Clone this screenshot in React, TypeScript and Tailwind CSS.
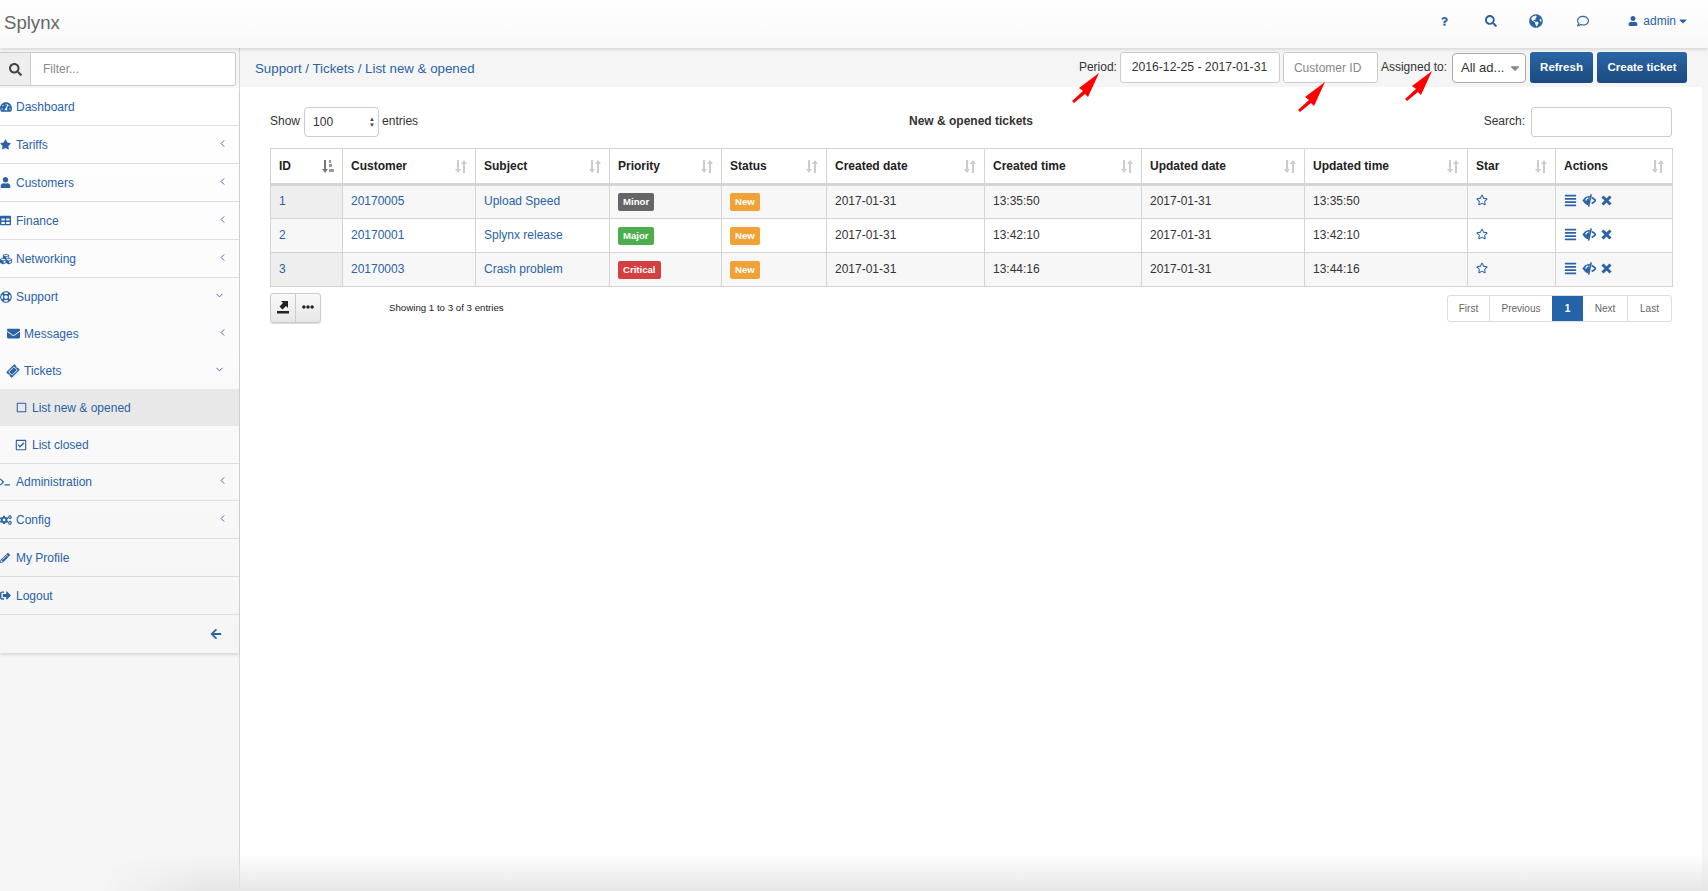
import {
  FaAlignJustify, FaArrowLeft, FaCaretDown, FaCogs, FaCubes, FaEllipsisH,
  FaEnvelope, FaGlobeAmericas, FaPencilAlt, FaQuestion, FaRegCheckSquare,
  FaRegComment, FaRegLifeRing, FaRegSquare, FaRegStar, FaSearch, FaSignOutAlt, FaStar, FaTable, FaTachometerAlt,
  FaTerminal, FaTicketAlt, FaUser,
} from 'react-icons/fa';
import { ChevronDown, ChevronLeft } from 'lucide-react';

const columns = [
  { name: 'ID', width: 'w-[72px]' },
  { name: 'Customer', width: 'w-[133px]' },
  { name: 'Subject', width: 'w-[134px]' },
  { name: 'Priority', width: 'w-[112px]' },
  { name: 'Status', width: 'w-[105px]' },
  { name: 'Created date', width: 'w-[158px]' },
  { name: 'Created time', width: 'w-[157px]' },
  { name: 'Updated date', width: 'w-[163px]' },
  { name: 'Updated time', width: 'w-[163px]' },
  { name: 'Star', width: 'w-[88px]' },
  { name: 'Actions', width: 'w-[117px]' },
];

const tickets = [
  { id: 1, customer: '20170005', subject: 'Upload Speed', priority: 'Minor', color: 'bg-[#666666]', time: '13:35:50' },
  { id: 2, customer: '20170001', subject: 'Splynx release', priority: 'Major', color: 'bg-[#4cae4c]', time: '13:42:10' },
  { id: 3, customer: '20170003', subject: 'Crash problem', priority: 'Critical', color: 'bg-[#d43f3f]', time: '13:44:16' },
];

function SortIcon({ active }: { active?: boolean }) {
  if (active) {
    return (
      <svg width="12" height="13" viewBox="0 0 12 13" className="shrink-0">
        <path d="M2 0h2v9h2l-3 4-3-4h2z" fill="#777" />
        <path d="M7 0h2v3H7zM7 4h3v3H7zM7 9h5v3H7z" fill="#999" />
      </svg>
    );
  }
  return (
    <svg width="12" height="13" viewBox="0 0 12 13" className="shrink-0">
      <path d="M2 0h2v9h2l-3 4-3-4h2z" fill="#ccc" />
      <path d="M8 13h2V4h2L9 0 6 4h2z" fill="#ccc" />
    </svg>
  );
}

function ExportIcon() {
  return (
    <svg width="12" height="13" viewBox="0 0 12 13" className="mb-[2px]">
      <path d="M0 10h12v2.500H0z" fill="#222" />
      <path d="M4 0h7v7L9 5 5.500 8.500 2.500 5.500 6 2z" fill="#222" />
    </svg>
  );
}

function EyeIcon() {
  return (
    <svg width="14" height="13" viewBox="0 0 16 14" fill="none">
      <path d="M9 1.500C5 1.500 2.500 4 .5 7c2 3 4.500 5.500 7 5.500z" fill="#2a62a8" />
      <path d="M7.500 4.200C5.800 4.400 4.500 5.600 4.300 7.200" stroke="#ffffff" strokeWidth="1.300" />
      <path d="M11 3.500C13 4.500 14.500 5.800 15.500 7c-1 1.200-2.500 2.500-4.500 3.500" stroke="#2a62a8" strokeWidth="1.800" />
      <path d="M10.500 0L7.500 14" stroke="#2a62a8" strokeWidth="1.800" />
    </svg>
  );
}

function CloseIcon() {
  return (
    <svg width="11" height="11" viewBox="0 0 11 11" fill="none">
      <path d="M1.500 1.500l8 8M9.500 1.500l-8 8" stroke="#2a62a8" strokeWidth="3" />
    </svg>
  );
}

function Arrow({ className }: { className: string }) {
  return (
    <svg width="28" height="30" viewBox="0 0 28 30" className={`absolute ${className}`}>
      <polygon points="27,0 7,15 11,18 0,28 2,30 13,21 16,24" fill="#ff0000" />
    </svg>
  );
}

function MenuRow({
  icon,
  label,
  chevron,
  border = true,
  className = 'h-[38px]',
  pad = 'pl-0',
  gap = 'w-[16px]',
}: {
  icon: React.ReactNode;
  label: string;
  chevron?: 'left' | 'down';
  border?: boolean;
  className?: string;
  pad?: string;
  gap?: string;
}) {
  return (
    <div className={`flex items-center text-[12px] text-[#2a62a8] ${pad} ${className} ${border ? 'border-b border-[#dedede]' : ''}`}>
      <span className={`flex items-center ${gap} shrink-0`}>{icon}</span>
      <span className="flex-1">{label}</span>
      {chevron === 'left' && <ChevronLeft size={11} strokeWidth={2} className="mr-[11px] mb-[3px]" />}
      {chevron === 'down' && <ChevronDown size={11} strokeWidth={2} className="mr-[14px] mb-[3px]" />}
    </div>
  );
}

export default function App() {
  return (
    <div className="relative flex h-[891px] w-full flex-col overflow-hidden bg-white font-['Liberation_Sans',Arial,sans-serif] text-[12px] text-[#333]">
      <header className="z-10 flex h-[48px] items-center bg-gradient-to-b from-white to-[#f8f8f8] pr-[19px] pl-[4px] shadow-[0_1px_4px_rgba(0,0,0,0.16)]">
        <div className="mb-[2px] flex-1 text-[18.600px] text-[#666]">Splynx</div>
        <div className="mb-[6px] flex items-center text-[12px] text-[#2a62a8]">
          <FaQuestion className="mr-[36px] text-[9px]" />
          <FaSearch className="mr-[32px] text-[12px]" />
          <FaGlobeAmericas className="mr-[34px] text-[14px]" />
          <FaRegComment className="mr-[39px] text-[12px]" />
          <FaUser className="mr-[5px] text-[10px]" />
          <span>admin</span>
          <FaCaretDown className="ml-[1px] text-[12px]" />
        </div>
      </header>

      <div className="flex min-h-0 flex-1">
        <aside className="flex w-[240px] shrink-0 flex-col border-r border-[#d8d8d8] bg-[#f6f6f6]">
          <div className="flex h-[40px] items-start bg-[#f5f5f5] pt-[4px]">
            <div className="flex h-[34px] w-[31px] items-center justify-center border-y border-r border-[#cccccc] bg-[#eeeeee]">
              <FaSearch className="text-[13px] text-[#444]" />
            </div>
            <input
              placeholder="Filter..."
              className="h-[34px] w-[205px] rounded-r-[3px] border-y border-r border-[#cccccc] bg-white pl-[12px] text-[12px] placeholder:text-[#888] outline-none"
            />
          </div>
          <nav className="bg-gradient-to-b from-white to-[#f5f5f5] shadow-[0_2px_3px_rgba(0,0,0,0.12)]">
            <MenuRow icon={<FaTachometerAlt className="text-[12px]" />} label="Dashboard" />
            <MenuRow icon={<FaStar className="text-[11px]" />} label="Tariffs" chevron="left" />
            <MenuRow icon={<FaUser className="text-[11px]" />} label="Customers" chevron="left" />
            <MenuRow icon={<FaTable className="text-[11px]" />} label="Finance" chevron="left" />
            <MenuRow icon={<FaCubes className="text-[12px]" />} label="Networking" chevron="left" />
            <MenuRow icon={<FaRegLifeRing className="text-[12px]" />} label="Support" chevron="down" border={false} className="h-[37px]" />
            <MenuRow icon={<FaEnvelope className="text-[13px]" />} label="Messages" chevron="left" border={false} className="h-[37px]" pad="pl-[7px]" gap="w-[17px]" />
            <MenuRow icon={<FaTicketAlt className="-rotate-45 text-[12px]" />} label="Tickets" chevron="down" border={false} className="h-[37px]" pad="pl-[7px]" gap="w-[17px]" />
            <MenuRow icon={<FaRegSquare className="text-[11px]" />} label="List new & opened" border={false} className="h-[37px] bg-[#e8e8e8]" pad="pl-[16px]" />
            <MenuRow icon={<FaRegCheckSquare className="text-[12px]" />} label="List closed" className="h-[38px]" pad="pl-[15px]" gap="w-[17px]" />
            <MenuRow icon={<FaTerminal className="text-[10px]" />} label="Administration" chevron="left" className="h-[37px]" />
            <MenuRow icon={<FaCogs className="text-[12px]" />} label="Config" chevron="left" />
            <MenuRow icon={<FaPencilAlt className="text-[10px]" />} label="My Profile" />
            <MenuRow icon={<FaSignOutAlt className="text-[11px]" />} label="Logout" />
            <div className="flex h-[38px] items-center justify-end pr-[17px] text-[#2a62a8]">
              <FaArrowLeft className="text-[12px]" />
            </div>
          </nav>
        </aside>

        <main className="flex min-w-0 flex-1 flex-col bg-white pr-[6px]">
          <div className="flex h-[39px] items-center rounded-br-[3px] bg-[#f5f5f5] pr-[15px] pl-[15px]">
            <div className="flex-1 pt-[2px] text-[13.300px] text-[#2a62a8]">Support / Tickets / List new &amp; opened</div>
            <span className="mr-[3px] mb-[2px]">Period:</span>
            <div className="flex h-[31px] w-[160px] items-center justify-center rounded-[3px] border border-[#cccccc] bg-white pr-[1px] text-[12.200px]">2016-12-25 - 2017-01-31</div>
            <input
              placeholder="Customer ID"
              className="ml-[3px] h-[31px] w-[95px] rounded-[3px] border border-[#cccccc] bg-white pl-[10px] text-[12px] placeholder:text-[#888] outline-none"
            />
            <span className="mr-[5px] mb-[2px] ml-[3px]">Assigned to:</span>
            <div className="flex h-[30px] w-[74px] items-center justify-between rounded-[4px] border border-[#aaaaaa] bg-white pr-[3px] pl-[8px] text-[13px]">
              <span>All ad...</span>
              <FaCaretDown className="text-[14px] text-[#888]" />
            </div>
            <button className="ml-[4px] h-[31px] w-[63px] rounded-[3px] bg-gradient-to-b from-[#2a66a6] to-[#1c4a80] font-bold text-[11.500px] text-white">Refresh</button>
            <button className="ml-[4px] h-[31px] w-[90px] rounded-[3px] bg-gradient-to-b from-[#2a66a6] to-[#1c4a80] font-bold text-[11.500px] text-white">Create ticket</button>
          </div>

          <section className="pt-[20px] pr-[30px] pl-[30px]">
            <div className="flex h-[30px] items-center">
              <div className="flex w-[460px] items-center">
                <span className="mr-[4px] mb-[2px]">Show</span>
                <div className="flex h-[30px] w-[75px] items-center justify-between rounded-[4px] border border-[#cccccc] pr-[3px] pl-[8px]">
                  <span>100</span>
                  <span className="flex flex-col text-[6px] leading-[6px] text-[#444]">
                    <span>▲</span>
                    <span>▼</span>
                  </span>
                </div>
                <span className="ml-[3px] mb-[2px]">entries</span>
              </div>
              <div className="mb-[2px] flex-1 text-center font-bold">New &amp; opened tickets</div>
              <div className="flex w-[460px] items-center justify-end">
                <span className="mr-[6px] mb-[2px]">Search:</span>
                <input className="h-[30px] w-[141px] rounded-[3px] border border-[#cccccc] outline-none" />
              </div>
            </div>

            <table className="mt-[11px] w-[1402px] table-fixed border-collapse border border-[#d4d4d4]">
              <colgroup>
                {columns.map(c => <col key={c.name} className={c.width} />)}
              </colgroup>
              <thead>
                <tr className="h-[36px] border-b-[3px] border-[#d4d4d4]">
                  {columns.map(c => (
                    <th key={c.name} className="border-r border-[#d4d4d4] pr-[8px] pl-[8px] text-left font-bold text-[#222]">
                      <div className="flex items-center justify-between">
                        {c.name}
                        <SortIcon active={c.name === 'ID'} />
                      </div>
                    </th>
                  ))}
                </tr>
              </thead>
              <tbody>
                {tickets.map((t, i) => (
                  <tr key={t.id} className={`h-[34px] border-b border-[#d4d4d4] ${i % 2 === 0 ? 'bg-[#f7f7f7]' : 'bg-white'}`}>
                    <td className={`border-r border-[#d4d4d4] pb-[2px] pl-[8px] text-[#2a62a8] ${i % 2 === 0 ? 'bg-[#eeeeee]' : 'bg-[#f7f7f7]'}`}>{t.id}</td>
                    <td className="border-r border-[#d4d4d4] pb-[2px] pl-[8px] text-[#2a62a8]">{t.customer}</td>
                    <td className="border-r border-[#d4d4d4] pb-[2px] pl-[8px] text-[#2a62a8]">{t.subject}</td>
                    <td className="border-r border-[#d4d4d4] pl-[8px]">
                      <span className={`inline-block h-[18px] rounded-[2px] px-[5px] align-middle text-[9.600px] leading-[18px] font-bold text-white ${t.color}`}>{t.priority}</span>
                    </td>
                    <td className="border-r border-[#d4d4d4] pl-[8px]">
                      <span className="inline-block h-[18px] rounded-[2px] bg-[#f0a236] px-[5px] align-middle text-[9.600px] leading-[18px] font-bold text-white">New</span>
                    </td>
                    <td className="border-r border-[#d4d4d4] pb-[2px] pl-[8px]">2017-01-31</td>
                    <td className="border-r border-[#d4d4d4] pb-[2px] pl-[8px]">{t.time}</td>
                    <td className="border-r border-[#d4d4d4] pb-[2px] pl-[8px]">2017-01-31</td>
                    <td className="border-r border-[#d4d4d4] pb-[2px] pl-[8px]">{t.time}</td>
                    <td className="border-r border-[#d4d4d4] pb-[4px] pl-[8px] text-[#2a62a8]"><FaRegStar className="text-[12px]" /></td>
                    <td className="border-r border-[#d4d4d4] pb-[3px] pl-[8px] text-[#2a62a8]">
                      <div className="flex items-center gap-[5px]">
                        <FaAlignJustify className="text-[13px]" />
                        <EyeIcon />
                        <CloseIcon />
                      </div>
                    </td>
                  </tr>
                ))}
              </tbody>
            </table>

            <div className="mt-[6px] flex items-start">
              <div className="flex h-[30px] w-[51px] rounded-[3px] border border-[#cccccc] bg-gradient-to-b from-[#fafafa] to-[#e6e6e6] shadow-[0_1px_1px_rgba(0,0,0,0.15)]">
                <div className="flex w-[25px] items-center justify-center border-r border-[#cccccc]"><ExportIcon /></div>
                <div className="flex flex-1 items-center justify-center pb-[2px] text-[#222]"><FaEllipsisH className="text-[12px]" /></div>
              </div>
              <div className="ml-[68px] flex-1 pt-[8px] text-[9.700px] text-[#222]">Showing 1 to 3 of 3 entries</div>
              <div className="mt-[2px] flex h-[27px] overflow-hidden rounded-[3px] border border-[#dddddd] text-[10px] text-[#666]">
                <span className="flex w-[42px] items-center justify-center border-r border-[#dddddd]">First</span>
                <span className="flex w-[62px] items-center justify-center">Previous</span>
                <span className="flex w-[31px] items-center justify-center bg-[#2563a8] font-bold text-white">1</span>
                <span className="flex w-[45px] items-center justify-center border-r border-[#dddddd]">Next</span>
                <span className="flex w-[43px] items-center justify-center">Last</span>
              </div>
            </div>
          </section>
        </main>
        <div className="absolute top-[48px] right-0 bottom-0 w-[6px] bg-[#f5f5f5]" />
      </div>

      {/* annotation arrows and the bottom fade lie over the page */}
      <Arrow className="top-[73px] left-[1072px]" />
      <Arrow className="top-[82px] left-[1298px]" />
      <Arrow className="top-[71px] left-[1405px]" />
      <div className="pointer-events-none absolute right-0 bottom-0 left-[100px] h-[36px] bg-gradient-to-b from-transparent to-[#e6e6e6] [mask-image:linear-gradient(to_right,transparent,black_100px)]" />
    </div>
  );
}
